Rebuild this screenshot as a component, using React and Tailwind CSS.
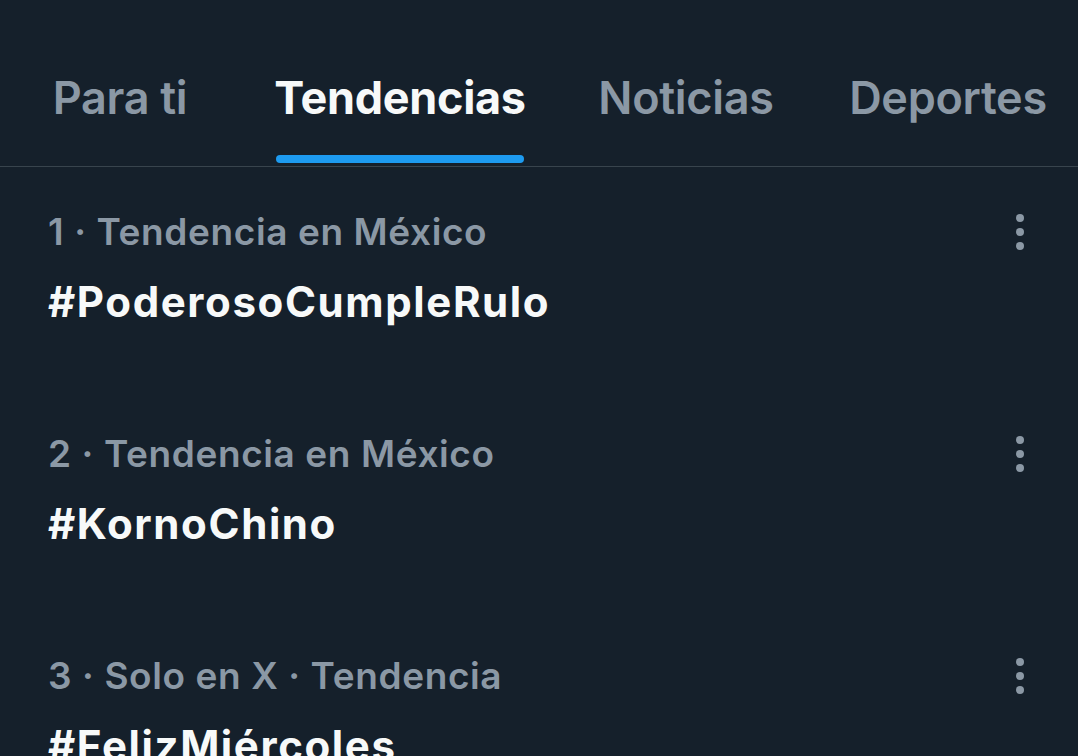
import { useState } from 'react';

const tabs = [
  { label: 'Para ti', w: 'w-[240px]' },
  { label: 'Tendencias', w: 'w-[320px]' },
  { label: 'Noticias', w: 'w-[252px]' },
  { label: 'Deportes', w: 'w-[272px]' },
];

const trends = [
  { meta: '1 · Tendencia en México', tag: '#PoderosoCumpleRulo' },
  { meta: '2 · Tendencia en México', tag: '#KornoChino' },
  { meta: '3 · Solo en X · Tendencia', tag: '#FelizMiércoles' },
];

function MoreDots() {
  return (
    <svg width="16" height="40" viewBox="0 0 16 40" className="text-[#8b98a5]">
      <circle cx="8" cy="6" r="4" fill="currentColor" />
      <circle cx="8" cy="20" r="4" fill="currentColor" />
      <circle cx="8" cy="34" r="4" fill="currentColor" />
    </svg>
  );
}

export default function App() {
  const [active, setActive] = useState(1);

  return (
    <div className="w-[1078px] h-[756px] overflow-hidden bg-[#15202b] font-['Inter','Liberation_Sans',sans-serif]">
      {/* Tabs */}
      <div className="flex h-[167px] border-b border-[#38444d] overflow-hidden">
        {tabs.map((t, i) => (
          <button
            key={t.label}
            onClick={() => setActive(i)}
            className={`${t.w} shrink-0 flex flex-col items-center pt-[72px]`}
          >
            <span
              className={`relative text-[45px] leading-[52px] tracking-[-0.3px] ${
                active === i ? 'font-bold text-[#f7f9f9]' : 'font-semibold text-[#8b98a5]'
              }`}
            >
              {t.label}
              {active === i && (
                <span className="absolute left-[2px] right-[2px] top-[83px] h-2 rounded-full bg-[#1d9bf0]" />
              )}
            </span>
          </button>
        ))}
      </div>

      {/* Trends list */}
      <div className="flex flex-col">
        {trends.map((t) => (
          <div key={t.tag} className="flex justify-between pl-12 pr-[50px] pt-[43px] h-[222px] shrink-0">
            <div className="flex flex-col gap-6">
              <div className="text-[37px] leading-[44px] font-semibold text-[#8b98a5] tracking-[0.6px]">{t.meta}</div>
              <div className="text-[42px] leading-[48px] font-bold text-[#f7f9f9] tracking-[1.6px]">{t.tag}</div>
            </div>
            <div className="h-[44px] flex items-center">
              <MoreDots />
            </div>
          </div>
        ))}
      </div>
    </div>
  );
}
